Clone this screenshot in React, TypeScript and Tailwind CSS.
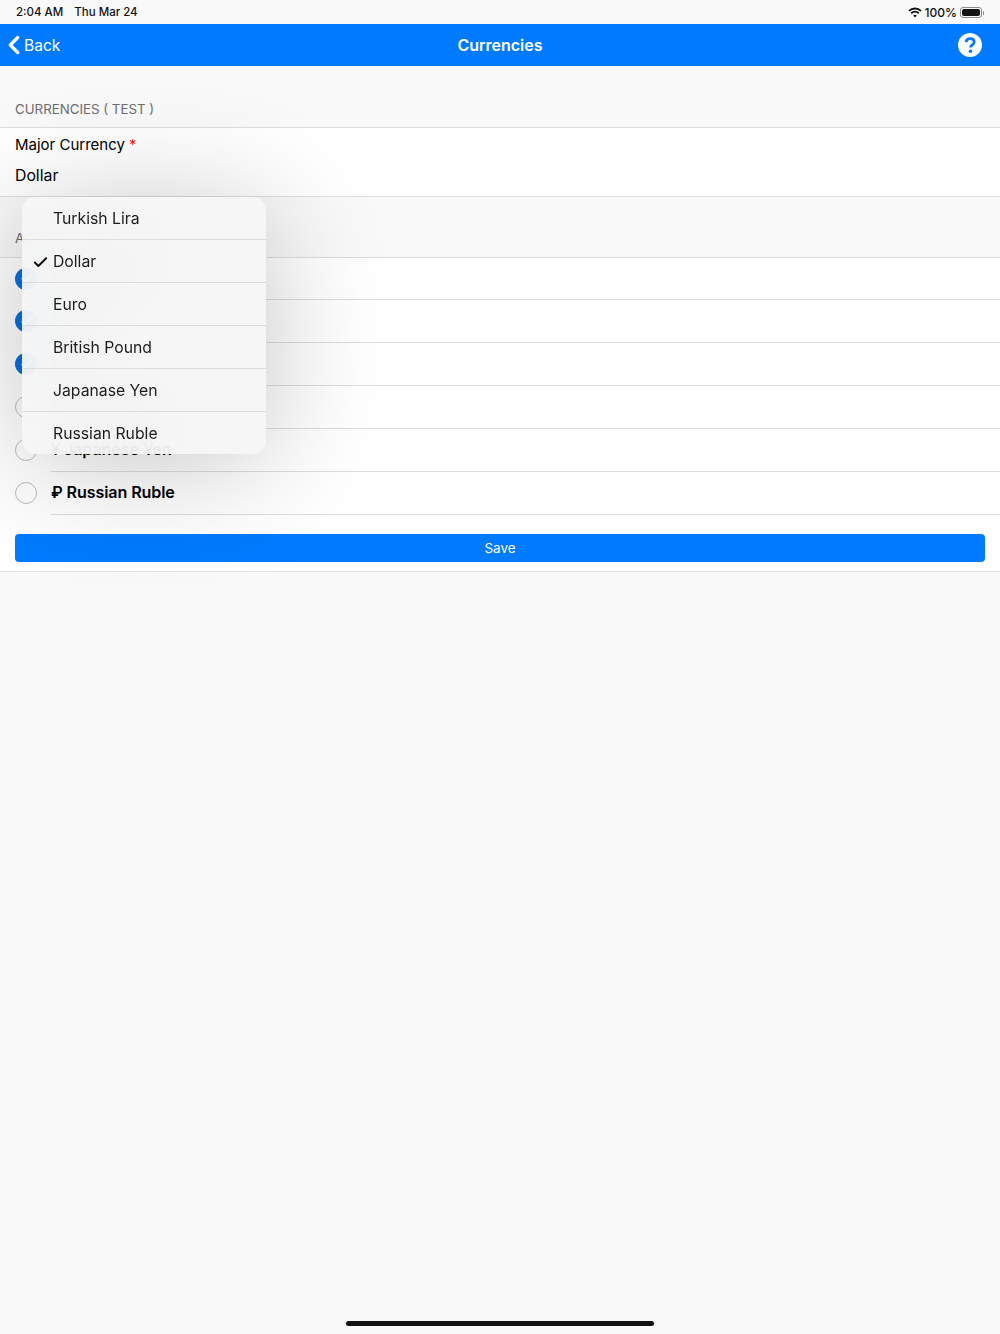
import { Check, ChevronLeft } from "lucide-react";

const rows = [
  { label: "₺ Turkish Lira", on: true },
  { label: "$ Dollar", on: true },
  { label: "€ Euro", on: true },
  { label: "£ British Pound", on: false },
  { label: "¥ Japanese Yen", on: false },
  { label: "₽ Russian Ruble", on: false },
];

const menu = ["Turkish Lira", "Dollar", "Euro", "British Pound", "Japanase Yen", "Russian Ruble"];

export default function App() {
  return (
    <div className="relative h-[1334px] w-[1000px] overflow-hidden bg-[#f9f9f9] font-['Inter',sans-serif] text-black">
      {/* Status bar */}
      <div className="flex h-6 items-center justify-between pl-4 pr-4 pt-[1px] text-[11.5px] font-medium text-[#111]">
        <div className="flex gap-[11px]">
          <span>2:04 AM</span>
          <span>Thu Mar 24</span>
        </div>
        <div className="flex items-center">
          <svg width="14" height="11" viewBox="0 0 14 11" fill="none" stroke="#111" strokeWidth="1.9" className="mr-[3px]">
            <path d="M1 3.9C4.4 .7 9.6 .7 13 3.9" />
            <path d="M3.2 6.2C5.4 4.2 8.6 4.2 10.8 6.2" />
            <path d="M7 10.6 5.2 8.4C6.2 7.5 7.8 7.5 8.8 8.4Z" fill="#111" stroke="none" />
          </svg>
          <span className="text-[12px]">100%</span>
          <div className="ml-[3px] flex items-center">
            <div className="h-[11px] w-[22px] rounded-[3px] border border-[#8a8a8a] p-[1px]">
              <div className="h-full w-full rounded-[2px] bg-[#111]" />
            </div>
            <div className="ml-[1px] h-1 w-[1px] rounded-r bg-[#8a8a8a]" />
          </div>
        </div>
      </div>

      {/* Nav bar */}
      <div className="relative flex h-[42px] items-center justify-between bg-[#007aff] pr-[18px] text-white">
        <div className="flex items-center">
          <ChevronLeft size={30} strokeWidth={2.6} className="-ml-[1px]" />
          <span className="-ml-[5px] pt-[1px] text-[15.600px]">Back</span>
        </div>
        <div className="absolute inset-0 flex items-center justify-center text-[16px] font-semibold">Currencies</div>
        <svg width="24" height="24" viewBox="0 0 24 24" className="relative">
          <circle cx="12" cy="12" r="12" fill="#fff" />
          <path d="M8 9.2C8.2 6.9 10 5.7 12.2 5.7 14.500 5.700 16.200 7 16.200 9 16.200 10.500 15.300 11.300 14.200 12 13.100 12.700 12.600 13.200 12.600 14.400" fill="none" stroke="#007aff" strokeWidth="2.700" />
          <circle cx="12.500" cy="18.200" r="1.800" fill="#007aff" />
        </svg>
      </div>

      {/* Section header */}
      <div className="flex h-[62px] items-end border-b border-[#dedede] pb-[7px] pl-[15px] text-[13.300px] text-[#6d6d72]">
        CURRENCIES ( TEST )
      </div>

      {/* Major currency */}
      <div className="h-[69px] border-b border-[#dedede] bg-white pl-[15px] pt-[6px]">
        <div className="h-[31px] text-[15px] leading-[21px]">
          Major Currency <span className="text-[#e6191f]">*</span>
        </div>
        <div className="text-[15.800px] leading-[21px]">Dollar</div>
      </div>

      {/* Second section header, mostly behind the menu */}
      <div className="flex h-[61px] items-end border-b border-[#dedede] pb-[8px] pl-[15px] text-[13.300px] text-[#6d6d72]">
        ACTIVE CURRENCIES
      </div>

      {/* Currency rows */}
      <div className="bg-white">
        {rows.map((row, i) => (
          <div key={row.label} className={i === 0 ? "flex h-[42px] items-center pl-[15px]" : "flex h-[43px] items-center pl-[15px]"}>
            <div
              className={
                row.on
                  ? "mb-[1px] flex h-[22px] w-[22px] shrink-0 items-center justify-center rounded-full bg-[#0a6fe0]"
                  : "mb-[1px] h-[22px] w-[22px] shrink-0 rounded-full border border-[#bdbdbd] bg-white"
              }
            >
              {row.on && <Check size={13} strokeWidth={3} className="text-white" />}
            </div>
            <div className="ml-[14px] flex h-full flex-1 items-center border-b border-[#dedede] pb-[1px] text-[16.100px] font-semibold tracking-[-0.1px]">
              {row.label}
            </div>
          </div>
        ))}
        <div className="border-b border-[#e2e2e2] px-[15px] pb-[9px] pt-[19px]">
          <button className="block h-[28px] w-full rounded-[4px] bg-[#007aff] text-[13.500px] text-white">Save</button>
        </div>
      </div>

      {/* Dropdown menu */}
      <div className="absolute left-[22px] top-[197px] w-[244px] rounded-[14px] bg-[#f5f5f5]/90 shadow-[0_10px_120px_rgba(0,0,0,0.23)] backdrop-blur-xl">
        {menu.map((item, i) => (
          <div
            key={item}
            className={
              i < menu.length - 1
                ? "relative flex h-[43px] items-center border-b border-[#dcdcdc] pl-[31px] pt-[2px] text-[15.750px] text-[#1c1c1e]"
                : "relative flex h-[42px] items-center pl-[31px] pt-[1px] text-[15.750px] text-[#1c1c1e]"
            }
          >
            {item === "Dollar" && <Check size={17} strokeWidth={2.800} className="absolute left-[10px] text-[#111]" />}
            {item}
          </div>
        ))}
      </div>

      {/* Home indicator */}
      <div className="absolute bottom-[8px] left-[346px] h-[5px] w-[308px] rounded-full bg-[#111]" />
    </div>
  );
}
